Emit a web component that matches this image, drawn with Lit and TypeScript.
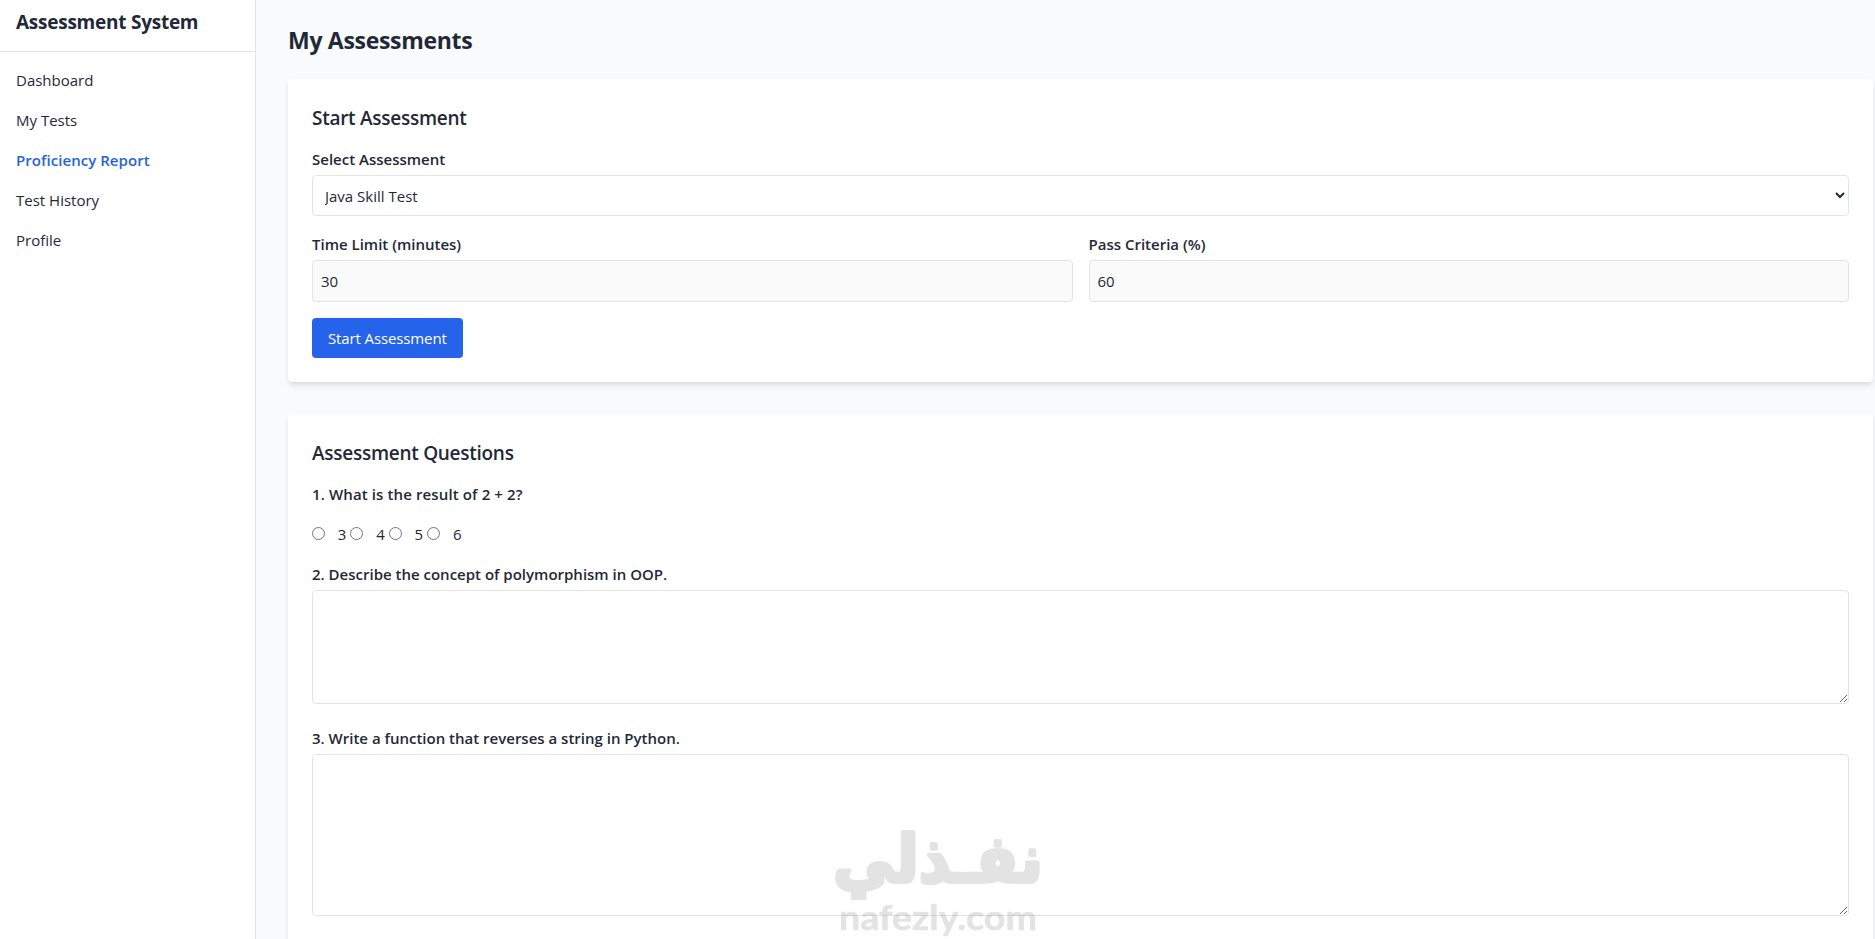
import { LitElement, css, html } from "lit";
import { customElement, state } from "lit/decorators.js";
import { classMap } from "lit/directives/class-map.js";

const NAV_ITEMS = ["Dashboard", "My Tests", "Proficiency Report", "Test History", "Profile"];
const ANSWERS = ["3", "4", "5", "6"];

@customElement("app-sidebar")
export class AppSidebar extends LitElement {
  @state()
  active = "Proficiency Report";

  static styles = css`
    :host {
      display: block;
      box-sizing: border-box;
      flex: none;
      width: 256px;
      background: #fff;
      border-right: 1px solid #e3e4e6;
    }

    .brand {
      padding: 8px 16px 15px;
      border-bottom: 1px solid #e3e4e6;
      font-size: 19px;
      font-weight: 700;
      letter-spacing: -0.25px;
      line-height: 28px;
    }

    nav {
      display: flex;
      flex-direction: column;
      padding: 8px 0;
    }

    a {
      padding: 8px 16px;
      color: inherit;
      font-size: 15px;
      line-height: 24px;
      text-decoration: none;
    }

    a.active {
      color: #2563d8;
      font-weight: 600;
      letter-spacing: 0.05px;
    }
  `;

  render() {
    return html`
      <div class="brand">Assessment System</div>
      <nav>
        ${NAV_ITEMS.map(
          (item) => html`<a
            class=${classMap({ active: item === this.active })}
            @click=${() => (this.active = item)}
            >${item}</a
          >`,
        )}
      </nav>
    `;
  }
}

@customElement("app-watermark")
export class AppWatermark extends LitElement {
  static styles = css`
    :host {
      position: fixed;
      left: 820px;
      top: 810px;
      width: 240px;
      height: 129px;
      pointer-events: none;
    }

    svg {
      display: block;
      opacity: 0.11;
    }

    text {
      stroke: #000;
      stroke-linejoin: round;
    }

    .ar {
      font: 700 66px "DejaVu Sans", sans-serif;
      stroke-width: 4px;
    }

    .en {
      font: 700 34px Lato, sans-serif;
      stroke-width: 0.6px;
    }
  `;

  render() {
    return html`
      <svg width="240" height="129" viewBox="0 0 240 129">
        <text class="ar" x="118" y="72" text-anchor="middle" direction="rtl" textLength="210" lengthAdjust="spacingAndGlyphs">نفـذلي</text>
        <text class="en" x="19" y="120" textLength="198" lengthAdjust="spacingAndGlyphs">nafezly.com</text>
      </svg>
    `;
  }
}

@customElement("app-root")
export class AppRoot extends LitElement {
  static styles = css`
    :host {
      display: flex;
      height: 100vh;
      overflow: hidden;
      background: #f9fafc;
      color: #1f2937;
      font-family: "Open Sans", "Noto Sans", sans-serif;
      font-size: 15px;
      line-height: 24px;
    }

    main {
      flex: 1;
      min-width: 0;
      padding: 24px 2px 0 32px;
    }

    h1 {
      margin: 0 0 23px;
      font-size: 23px;
      font-weight: 700;
      letter-spacing: -0.3px;
      line-height: 32px;
    }

    h2 {
      margin: 0 0 15px;
      padding-top: 1px;
      font-size: 19px;
      font-weight: 600;
      letter-spacing: -0.27px;
      line-height: 28px;
    }

    .card {
      margin-bottom: 32px;
      padding: 24px;
      background: #fff;
      border-radius: 4px;
      box-shadow:
        0 4px 6px -1px rgba(0, 0, 0, 0.1),
        0 2px 4px -1px rgba(0, 0, 0, 0.06);
    }

    .field {
      margin-bottom: 16px;
    }

    .row {
      display: grid;
      grid-template-columns: 1fr 1fr;
      gap: 16px;
    }

    label.title,
    p {
      display: block;
      margin: 0 0 4px;
      font-weight: 600;
    }

    p {
      margin-bottom: 16px;
      letter-spacing: 0.12px;
    }

    select,
    input[type="text"],
    textarea {
      display: block;
      box-sizing: border-box;
      width: 100%;
      margin: 0;
      padding: 8px;
      border: 1px solid #e3e4e6;
      border-radius: 4px;
      background: #fff;
      color: inherit;
      font: inherit;
    }

    select {
      height: 41px;
    }

    input[type="text"] {
      height: 42px;
      background: #fafafa;
    }

    textarea.short {
      height: 114px;
    }

    textarea.long {
      height: 162px;
    }

    button {
      display: block;
      height: 40px;
      padding: 0 16px;
      border: 0;
      border-radius: 4px;
      background: #2563eb;
      color: #fff;
      font: inherit;
      letter-spacing: -0.12px;
    }

    .answers {
      display: flex;
      align-items: center;
      gap: 4px;
      margin-bottom: 16px;
    }

    .answers label {
      display: flex;
      align-items: center;
    }

    .answers input {
      width: 13px;
      height: 13px;
      margin: 0 12.8px 1px 0;
    }

    .question {
      margin-bottom: 22px;
    }
  `;

  render() {
    return html`
      <app-sidebar></app-sidebar>
      <main>
        <h1>My Assessments</h1>
        <section class="card">
          <h2>Start Assessment</h2>
          <div class="field">
            <label class="title">Select Assessment</label>
            <select>
              <option>Java Skill Test</option>
            </select>
          </div>
          <div class="field row">
            <div>
              <label class="title">Time Limit (minutes)</label>
              <input type="text" .value=${"30"} readonly />
            </div>
            <div>
              <label class="title">Pass Criteria (%)</label>
              <input type="text" .value=${"60"} readonly />
            </div>
          </div>
          <button>Start Assessment</button>
        </section>
        <section class="card">
          <h2>Assessment Questions</h2>
          <p>1. What is the result of 2 + 2?</p>
          <div class="answers">
            ${ANSWERS.map(
              (a) => html`<label><input type="radio" name="q1" value=${a} />${a}</label>`,
            )}
          </div>
          <div class="question">
            <label class="title">2. Describe the concept of polymorphism in OOP.</label>
            <textarea class="short"></textarea>
          </div>
          <div class="question">
            <label class="title">3. Write a function that reverses a string in Python.</label>
            <textarea class="long"></textarea>
          </div>
        </section>
      </main>
      <app-watermark></app-watermark>
    `;
  }
}
